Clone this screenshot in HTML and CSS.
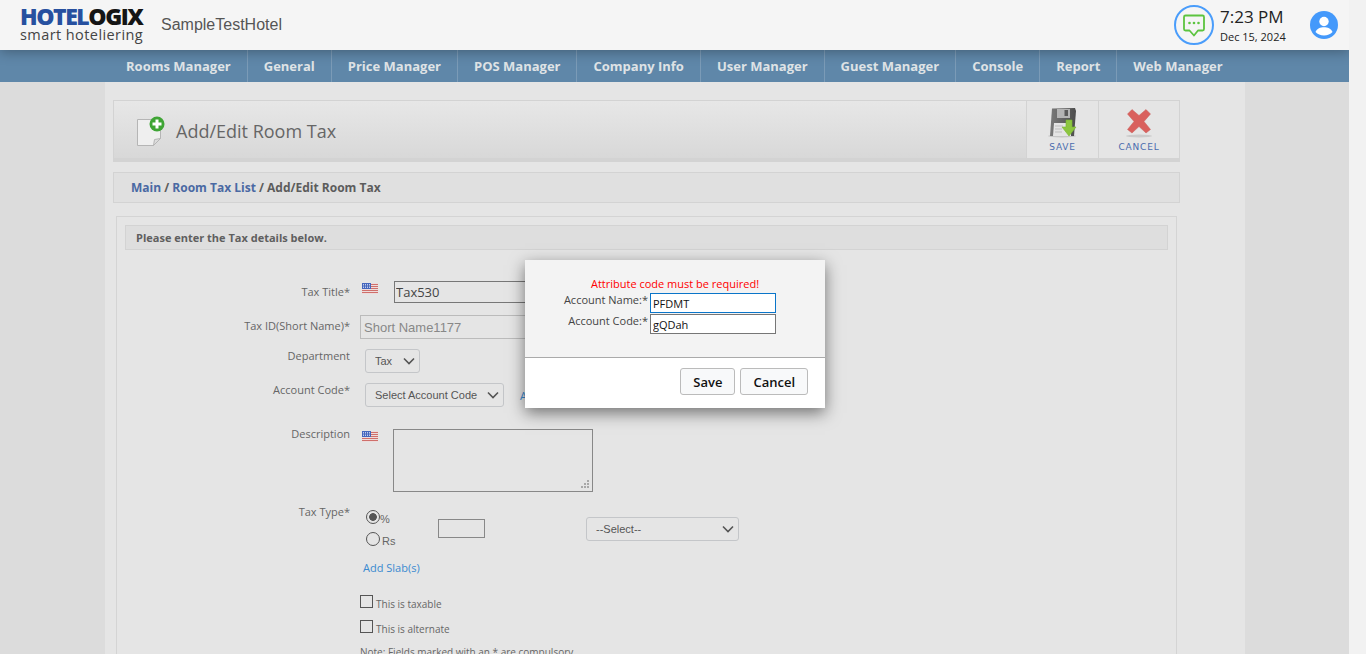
FILE: index.html
```html
<!DOCTYPE html>
<html lang="en">
<head>
    <meta charset="UTF-8">
    <title>Add/Edit Room Tax - Hotelogix</title>
    <link rel="stylesheet" href="styles.css">
</head>
<body>

<div class="page">
    <header class="top-bar">
        <div class="logo">
            <div class="logo-name"><span class="logo-blue">HOTEL</span>OGIX</div>
            <div class="logo-tag">smart hoteliering</div>
        </div>
        <div class="hotel-name">SampleTestHotel</div>
        <svg class="chat-icon" width="40" height="40" viewBox="0 0 40 40">
            <circle cx="20" cy="20" r="19" fill="none" stroke="#4a9dfb" stroke-width="2"/>
            <path d="M11.500 10.500h17a1.500 1.500 0 0 1 1.500 1.500v12a1.500 1.500 0 0 1-1.500 1.500h-4.500L20 30.500l-4.500-5h-4a1.500 1.500 0 0 1-1.500-1.500v-12a1.500 1.500 0 0 1 1.500-1.500z" fill="none" stroke="#5cc43f" stroke-width="1.800" stroke-linejoin="round"/>
            <circle cx="15.500" cy="18" r="1.300" fill="#5cc43f"/>
            <circle cx="20" cy="18" r="1.300" fill="#5cc43f"/>
            <circle cx="24.500" cy="18" r="1.300" fill="#5cc43f"/>
        </svg>
        <div class="clock">
            <div class="clock-time">7:23 PM</div>
            <div class="clock-date">Dec 15, 2024</div>
        </div>
        <svg class="user-icon" width="28" height="28" viewBox="0 0 28 28">
            <circle cx="14" cy="14" r="14" fill="#4499fb"/>
            <circle cx="14" cy="10.500" r="4.700" fill="#fff"/>
            <path d="M5.500 21c1.500-3.400 4.800-4.700 8.500-4.700s7 1.300 8.500 4.700c-2 2.300-5 3.500-8.500 3.500s-6.500-1.200-8.500-3.500z" fill="#fff"/>
        </svg>
    </header>

    <nav class="main-nav">
        <a>Rooms Manager</a>
        <a>General</a>
        <a>Price Manager</a>
        <a>POS Manager</a>
        <a>Company Info</a>
        <a>User Manager</a>
        <a>Guest Manager</a>
        <a>Console</a>
        <a>Report</a>
        <a>Web Manager</a>
    </nav>

    <main class="content">
        <div class="title-bar">
            <svg class="title-icon" width="30" height="32" viewBox="0 0 30 32">
                <path d="M1.500 4.500h23v19l-7 7h-16z" fill="#efefef" stroke="#b5b5b5"/>
                <path d="M17.500 30.500l1-6 6-1z" fill="#dcdcdc" stroke="#b5b5b5"/>
                <circle cx="21" cy="9" r="7.500" fill="#3fa535"/>
                <path d="M19.500 4.500h3v3h3v3h-3v3h-3v-3h-3v-3h3z" fill="#fff"/>
            </svg>
            <h1>Add/Edit Room Tax</h1>
            <div class="tool save-tool">
                <svg width="32" height="32" viewBox="0 0 32 32">
                    <defs>
                        <linearGradient id="diskBody" x1="0" y1="0" x2="1" y2="0">
                            <stop offset="0" stop-color="#7a7a7a"/>
                            <stop offset="1" stop-color="#4c4c4c"/>
                        </linearGradient>
                    </defs>
                    <ellipse cx="15" cy="29" rx="14" ry="1.500" fill="#c6c6c6"/>
                    <path d="M5 1.500l23-.5 1 3-2 25H3z" fill="url(#diskBody)"/>
                    <rect x="10" y="2" width="13" height="9" fill="#b4b4b4"/>
                    <rect x="17.500" y="3" width="3.500" height="6" fill="#5a5a5a"/>
                    <path d="M7 16h17v13H6z" fill="#e4e4e4"/>
                    <path d="M8 19h8M8 22h7M8 25h7" stroke="#bdbdbd"/>
                    <path d="M19 13h6v7h4l-7 9-7-9h4z" fill="#8cc63f" stroke="#79b431" stroke-width=".6"/>
                </svg>
                <span>SAVE</span>
            </div>
            <div class="tool cancel-tool">
                <svg width="28" height="32" viewBox="0 0 28 32">
                    <ellipse cx="14" cy="29" rx="13" ry="1.500" fill="#cbcbcb"/>
                    <path d="M2.500 7L7 2.500l7 6 7-6L25.500 7l-6.500 7.500 6.500 8-4.500 3.500-7-6.500L7 26l-4.500-3.500 6.500-8z" fill="#d9605d" stroke="#c9605c" stroke-width=".5" stroke-linejoin="round"/>
                </svg>
                <span>CANCEL</span>
            </div>
        </div>

        <div class="breadcrumb"><a>Main</a> / <a>Room Tax List</a> / Add/Edit Room Tax</div>

        <section class="panel">
            <div class="panel-head">Please enter the Tax details below.</div>

            <div class="row row-title">
                <label>Tax Title*</label>
                <svg class="flag" width="16" height="11" viewBox="0 0 16 11"><use href="#us-flag"/></svg>
                <input class="title-input" type="text" value="Tax530">
            </div>
            <div class="row row-short">
                <label>Tax ID(Short Name)*</label>
                <input class="short-input" type="text" placeholder="Short Name1177" disabled>
            </div>
            <div class="row row-dept">
                <label>Department</label>
                <select class="dept-select"><option>Tax</option></select>
            </div>
            <div class="row row-account">
                <label>Account Code*</label>
                <select class="account-select"><option>Select Account Code</option></select>
                <a class="link add-account">Add Account</a>
            </div>
            <div class="row row-desc">
                <label>Description</label>
                <svg class="flag" width="16" height="11" viewBox="0 0 16 11"><use href="#us-flag"/></svg>
                <textarea class="desc-input"></textarea>
            </div>
            <div class="row row-type">
                <label>Tax Type*</label>
                <div class="radio-list">
                    <div class="radio-item"><input type="radio" name="taxType" checked><span>%</span></div>
                    <div class="radio-item"><input type="radio" name="taxType"><span class="radio-rs">Rs</span></div>
                </div>
                <input class="rate-input" type="text">
                <select class="slab-select"><option>--Select--</option></select>
            </div>
            <div class="extras">
                <a class="link">Add Slab(s)</a>
                <div class="check-item check-first"><input type="checkbox"><span>This is taxable</span></div>
                <div class="check-item"><input type="checkbox"><span>This is alternate</span></div>
                <p class="note">Note: Fields marked with an * are compulsory</p>
            </div>
        </section>
    </main>
</div>

<!-- Account popup -->
<div class="modal" role="dialog" aria-modal="true">
    <div class="modal-body">
        <p class="modal-error">Attribute code must be required!</p>
        <div class="modal-field modal-field-first">
            <label>Account Name:*</label>
            <input class="focused" type="text" value="PFDMT">
        </div>
        <div class="modal-field">
            <label>Account Code:*</label>
            <input type="text" value="gQDah">
        </div>
    </div>
    <div class="modal-foot">
        <button>Save</button>
        <button>Cancel</button>
    </div>
</div>

<svg width="0" height="0" class="svg-defs">
    <symbol id="us-flag" viewBox="0 0 16 11">
        <rect width="16" height="11" fill="#eddcdc"/>
        <path d="M0 1.500h16M0 3.500h16M0 5.500h16M0 7.500h16M0 9.500h16" stroke="#cf6f6b" stroke-width="1"/>
        <rect width="9" height="6" fill="#4466bd"/>
        <path d="M1 1.500h7M1 3h7M1 4.500h7" stroke="#dfe6f7" stroke-width=".8" stroke-dasharray="1 1"/>
    </symbol>
</svg>

</body>
</html>
```

FILE: styles.css
```css
body {
    margin: 0;
    height: 654px;
    overflow: hidden;
    background-color: #f2f2f2;
    font-family: "Open Sans", Arial, sans-serif;
    color: #666;
}

.page {
    width: 1349px;
    height: 654px;
    overflow: hidden;
    background-color: #dcdcdc;
}

.svg-defs {
    position: absolute;
}

/* Top bar */
.top-bar {
    position: relative;
    z-index: 2;
    display: flex;
    align-items: center;
    height: 50px;
    padding-left: 20px;
    background-color: #f5f5f5;
    box-shadow: 0 2px 12px rgba(0,0,0,0.3);
}

.logo {
    width: 141px;
    margin-top: -1px;
}

.logo-name {
    font-size: 23px;
    line-height: 19px;
    font-weight: 800;
    letter-spacing: -1.450px;
    color: #151515;
}

.logo-blue {
    color: #27509f;
}

.logo-tag {
    margin-top: 1px;
    font-size: 14.500px;
    line-height: 16px;
    letter-spacing: 0.420px;
    color: #444;
}

.hotel-name {
    font-family: "Liberation Sans", Arial, sans-serif;
    font-size: 16px;
    color: #555;
}

.chat-icon {
    margin-left: auto;
}

.clock {
    width: 90px;
    margin-left: 6px;
    color: #222;
}

.clock-time {
    font-size: 17px;
    line-height: 22px;
}

.clock-date {
    font-size: 11px;
    line-height: 15px;
    margin-top: 1px;
}

.user-icon {
    margin-right: 11px;
    margin-left: 0;
}

/* Menu */
.main-nav {
    display: flex;
    height: 32px;
    padding-left: 110px;
    background-color: #5f87a9;
}

.main-nav a {
    padding: 0 16px;
    border-right: 1px solid #7b9bb7;
    font-size: 13px;
    font-weight: 700;
    line-height: 32px;
    color: #dfe3e6;
}

.main-nav a:last-child {
    border-right: none;
}

/* Content column */
.content {
    width: 1132px;
    height: 572px;
    margin-left: 105px;
    padding: 18px 0 0 8px;
    background-color: #e5e5e5;
}

.title-bar {
    display: flex;
    align-items: stretch;
    width: 1065px;
    height: 57px;
    border: 1px solid #d3d3d3;
    border-bottom-width: 4px;
    background: linear-gradient(#e7e7e7, #d8d8d8);
}

.title-icon {
    align-self: center;
    margin: 3px 10px 0 22px;
}

.title-bar h1 {
    flex: 1;
    align-self: center;
    margin: 3px 0 0;
    font-size: 18px;
    font-weight: 400;
    color: #666;
}

.tool {
    display: flex;
    flex-direction: column;
    align-items: center;
    padding-top: 6px;
    border-left: 1px solid #d3d3d3;
    background-color: #e5e5e5;
    box-sizing: border-box;
}

.save-tool {
    width: 72px;
}

.cancel-tool {
    width: 81px;
}

.tool span {
    margin-top: 1px;
    font-family: "DejaVu Sans", Arial, sans-serif;
    font-size: 9px;
    line-height: 14px;
    letter-spacing: 0.800px;
    color: #4a6cae;
}

.breadcrumb {
    width: 1048px;
    height: 29px;
    margin-top: 10px;
    padding-left: 17px;
    border: 1px solid #d3d3d3;
    font-size: 12px;
    font-weight: 700;
    line-height: 29px;
    color: #5c5c5c;
    background-color: #e0e0e0;
}

.breadcrumb a {
    color: #4a69a3;
}

/* Form panel */
.panel {
    width: 1059px;
    height: 500px;
    margin: 13px 0 0 3px;
    border: 1px solid #d4d4d4;
}

.panel-head {
    width: 1031px;
    height: 23px;
    margin: 8px 0 0 8px;
    padding-left: 10px;
    border: 1px solid #d3d3d3;
    font-size: 11px;
    font-weight: 700;
    line-height: 23px;
    color: #5f5f5f;
    background-color: #dedede;
}

.row {
    display: flex;
    align-items: flex-start;
}

.row label {
    width: 233px;
    flex: none;
    font-size: 11px;
    line-height: 16px;
    text-align: right;
    color: #666;
}

.flag {
    flex: none;
    margin-left: 12px;
}

input[type="text"], textarea, select {
    box-sizing: border-box;
    background-color: transparent;
}

select {
    appearance: none;
    border: 1px solid #c4c6c9;
    border-radius: 3px;
    font-family: "Liberation Sans", Arial, sans-serif;
    font-size: 11px;
    color: #555;
    padding-left: 9px;
    background-image: url("data:image/svg+xml,%3Csvg xmlns='http://www.w3.org/2000/svg' width='12' height='8'%3E%3Cpath d='M1 1.500l5 5 5-5' fill='none' stroke='%23555' stroke-width='1.600'/%3E%3C/svg%3E");
    background-repeat: no-repeat;
    background-position: right 4px center;
}

.row-title {
    margin-top: 31px;
}

.row-title label {
    margin-top: 3px;
}

.row-title .flag {
    margin-top: 2px;
}

.title-input {
    width: 200px;
    height: 22px;
    margin-left: 16px;
    padding: 0 1px;
    border: 1px solid #777;
    font-family: "Open Sans", Arial, sans-serif;
    font-size: 13px;
    color: #444;
}

.row-short {
    margin-top: 12px;
}

.row-short label {
    margin-top: 3px;
}

.short-input {
    width: 200px;
    height: 24px;
    margin-left: 10px;
    padding: 0 3px;
    border: 1px solid #bbb;
    font-family: "Liberation Sans", Arial, sans-serif;
    font-size: 13px;
}

.short-input::placeholder {
    color: #888;
}

.row-dept {
    margin-top: 10px;
}

.row-dept label {
    margin-top: -1px;
}

.dept-select {
    width: 55px;
    height: 24px;
    margin-left: 15px;
}

.row-account {
    margin-top: 10px;
}

.row-account label {
    margin-top: -1px;
}

.account-select {
    width: 139px;
    height: 24px;
    margin-left: 15px;
}

.link {
    font-size: 11px;
    line-height: 16px;
    color: #3a8ad0;
}

.add-account {
    margin: 5px 0 0 16px;
}

.row-desc {
    margin-top: 22px;
}

.row-desc .flag {
    margin-top: 2px;
}

.row-desc label {
    margin-top: -3px;
}

.desc-input {
    display: block;
    width: 200px;
    height: 63px;
    margin: 0 0 0 15px;
    border: 1px solid #888;
    flex: none;
    resize: none;
    background-image: url("data:image/svg+xml,%3Csvg xmlns='http://www.w3.org/2000/svg' width='8' height='8'%3E%3Cpath d='M6 0h2v2H6zM3 3h2v2H3zM6 3h2v2H6zM0 6h2v2H0zM3 6h2v2H3zM6 6h2v2H6z' fill='%23a8a8a8'/%3E%3C/svg%3E");
    background-repeat: no-repeat;
    background-position: right 3px bottom 3px;
}

.row-type {
    margin-top: 14px;
}

.row-type label {
    margin-top: -2px;
}

.radio-list {
    width: 72px;
    margin: 4px 0 0 16px;
    flex: none;
}

.radio-item {
    display: flex;
    height: 22px;
    font-family: "Liberation Sans", Arial, sans-serif;
    font-size: 11px;
    color: #666;
}

.radio-item span {
    margin-top: 3px;
    margin-left: -1px;
}

.radio-item .radio-rs {
    margin-left: 1px;
}

.radio-item input {
    appearance: none;
    width: 14px;
    height: 14px;
    margin: 0 1px 0 0;
    border: 1px solid #555;
    border-radius: 50%;
    background-color: transparent;
    box-sizing: border-box;
}

.radio-item input:checked {
    background: radial-gradient(circle, #555 0, #555 3.500px, transparent 4.200px);
}

.rate-input {
    width: 47px;
    height: 19px;
    margin-top: 13px;
    border: 1px solid #888;
}

.slab-select {
    width: 153px;
    height: 24px;
    margin: 11px 0 0 101px;
}

.extras {
    margin: 6px 0 0 243px;
}

.extras .link {
    display: block;
    margin-left: 3px;
}

.check-item {
    display: flex;
    align-items: flex-start;
    height: 25px;
    font-size: 10px;
}

.check-first {
    margin-top: 19px;
}

.check-item input {
    appearance: none;
    width: 13px;
    height: 13px;
    margin: 0 3px 0 0;
    border: 1px solid #555;
    background-color: transparent;
    box-sizing: border-box;
    flex: none;
}

.check-item span {
    margin-top: 2px;
    line-height: 14px;
}

.note {
    margin: 0;
    font-size: 10px;
    line-height: 14px;
}

/* Popup */
.modal {
    position: fixed;
    top: 260px;
    left: 525px;
    z-index: 5;
    width: 300px;
    height: 148px;
    background-color: #fff;
    box-shadow: 0 5px 15px rgba(0,0,0,0.5);
}

.modal-body {
    height: 98px;
    box-sizing: border-box;
    padding-top: 16px;
    border-bottom: 1px solid #aaa;
    background-color: #f3f3f3;
}

.modal-error {
    margin: 0;
    font-size: 11px;
    line-height: 16px;
    text-align: center;
    color: #f00;
}

.modal-field {
    display: flex;
    height: 21px;
}

.modal-field-first {
    margin-top: 1px;
}

.modal-field label {
    width: 123px;
    margin-top: -1px;
    margin-right: 2px;
    font-size: 11px;
    line-height: 15px;
    text-align: right;
    color: #444;
}

.modal-field input {
    width: 126px;
    height: 20px;
    padding: 0 2px;
    border: 1px solid #767676;
    font-family: "Open Sans", Arial, sans-serif;
    font-size: 11px;
    color: #111;
    background-color: #fff;
    box-sizing: border-box;
}

.modal-field input.focused {
    border-color: #0a75c9;
}

.modal-foot {
    display: flex;
    justify-content: flex-end;
    gap: 5px;
    padding: 10px 17px 0 0;
}

.modal-foot button {
    height: 27px;
    padding: 0 12px;
    border: 1px solid #bbb;
    border-radius: 3px;
    font-family: "Open Sans", Arial, sans-serif;
    font-size: 13px;
    font-weight: 600;
    color: #111;
    background-color: #f8f9fa;
}
```
